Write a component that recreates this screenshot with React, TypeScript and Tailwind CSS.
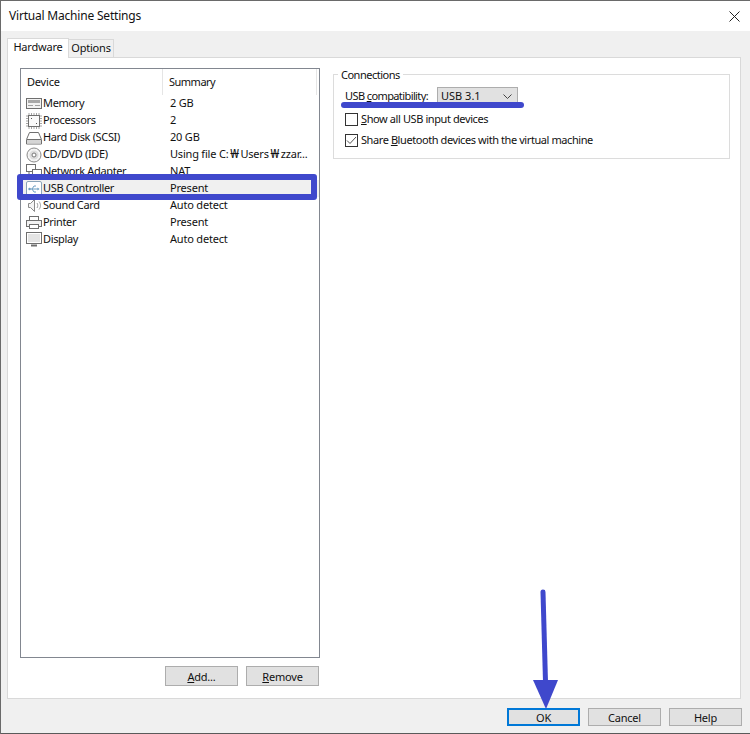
import React from "react";

const G = "#6f6f6f";

const icons: Record<string, React.ReactNode> = {
  memory: (
    <>
      <rect x="0.5" y="2.5" width="15" height="10" fill="#f2f2f2" stroke={G} />
      <rect x="2" y="4" width="12" height="3" fill="#a8a8a8" />
      <path d="M2 9.500h5M9 9.500h5" stroke="#a0a0a0" />
    </>
  ),
  cpu: (
    <>
      <path d="M3 0v16M5.500 0v16M8 0v16M10.500 0v16M13 0v16M0 3h16M0 5.500h16M0 8h16M0 10.500h16M0 13h16" stroke="#a5a5a5" />
      <rect x="2.500" y="2.500" width="11" height="11" fill="#fafafa" stroke={G} />
      <path d="M5 5h1v1H5zM10 10h1v1h-1z" fill="#555" />
    </>
  ),
  disk: (
    <>
      <path d="M3.500 2.500h9l3 7v4.500h-15v-4.500z" fill="#fff" stroke={G} />
      <path d="M1 9.500h14" stroke={G} />
      <rect x="1" y="10" width="14" height="3.500" fill="#d5d5d5" />
    </>
  ),
  cd: (
    <>
      <circle cx="8" cy="8" r="7" fill="#f4f4f4" stroke="#8a8a8a" />
      <circle cx="8" cy="8" r="4.500" fill="#dcdcdc" />
      <circle cx="8" cy="8" r="2" fill="#fff" stroke="#777" />
    </>
  ),
  net: (
    <>
      <rect x="0.500" y="0.500" width="9" height="7" fill="#fff" stroke={G} />
      <rect x="6.500" y="5.500" width="9" height="6" fill="#fff" stroke={G} />
      <path d="M3 8v5h5" stroke={G} fill="none" />
    </>
  ),
  usb: (
    <>
      <rect x="0.500" y="0.500" width="15" height="15" rx="1.500" fill="#fff" stroke="#8aa4b8" />
      <path d="M3 8h9M6 8l2-3h2M6 8l2 3h2" stroke="#6d9ec2" fill="none" />
      <path d="M13.500 8l-2-1.500v3z" fill="#6d9ec2" />
      <circle cx="3.500" cy="8" r="1.200" fill="#6d9ec2" />
    </>
  ),
  sound: (
    <>
      <path d="M2.500 5.500h2l4-4v12l-4-4h-2z" fill="#f4f4f4" stroke="#8a8a8a" />
      <path d="M11 5c1 1.500 1 3.500 0 5M13 3.500c2 2.500 2 5.500 0 8" stroke="#9a9a9a" fill="none" />
    </>
  ),
  printer: (
    <>
      <rect x="3.500" y="1.500" width="9" height="4" fill="#fff" stroke={G} />
      <rect x="0.500" y="5.500" width="15" height="6" fill="#f2f2f2" stroke={G} />
      <rect x="3.500" y="9.500" width="9" height="4" fill="#fff" stroke={G} />
    </>
  ),
  display: (
    <>
      <rect x="0.500" y="0.500" width="15" height="11" fill="#fff" stroke={G} />
      <rect x="2" y="2" width="12" height="8" fill="#e4e4e4" />
      <path d="M5 13.500h6" stroke={G} strokeWidth="2" />
    </>
  ),
};

const rows = [
  ["memory", "Memory", "2 GB"],
  ["cpu", "Processors", "2"],
  ["disk", "Hard Disk (SCSI)", "20 GB"],
  ["cd", "CD/DVD (IDE)", "Using file C:₩Users₩zzar..."],
  ["net", "Network Adapter", "NAT"],
  ["usb", "USB Controller", "Present"],
  ["sound", "Sound Card", "Auto detect"],
  ["printer", "Printer", "Present"],
  ["display", "Display", "Auto detect"],
];

function Summary({ text }: { text: string }) {
  const parts = text.split("₩");
  return (
    <span className="whitespace-nowrap">
      {parts.map((p, i) => (
        <React.Fragment key={i}>
          {i > 0 && <span className="inline-block w-[12px] text-center text-[13px] leading-none">₩</span>}
          {p}
        </React.Fragment>
      ))}
    </span>
  );
}

function Btn({ children, className = "" }: { children: React.ReactNode; className?: string }) {
  return (
    <div className={`w-[73px] flex items-center justify-center bg-[#e1e1e1] border border-[#adadad] leading-none ${className}`}>
      {children}
    </div>
  );
}

export default function App() {
  return (
    <div
      className="relative w-[750px] h-[734px] overflow-hidden flex flex-col bg-white border-l border-t border-[#6a6a6a] text-[#111] text-[11px] tracking-[-0.2px]"
      style={{ fontFamily: '"Noto Sans", "Noto Sans CJK KR", sans-serif' }}
    >
      <div className="h-[30px] shrink-0 bg-white flex items-center justify-between pl-[8px] pr-[10px] text-[12px]">
        <span>Virtual Machine Settings</span>
        <svg width="11" height="11" viewBox="0 0 11 11">
          <path d="M0.500 0.500l10 10M10.500 0.500l-10 10" stroke="#222" fill="none" />
        </svg>
      </div>

      <div className="flex-1 flex flex-col bg-[#f0f0f0] border-b border-[#5a5a5a] pt-[6px] pl-[6px] pr-[9px]">
        <div className="h-[20px] flex items-end">
          <div className="relative z-10 h-[20px] w-[62px] -mb-px bg-white border border-b-0 border-[#d9d9d9] flex items-center justify-center pb-[2px]">
            Hardware
          </div>
          <div className="h-[18px] w-[45px] bg-[#f0f0f0] border border-b-0 border-l-0 border-[#d9d9d9] flex items-center justify-center">
            Options
          </div>
        </div>

        <div className="h-[642px] bg-white border border-[#d9d9d9] flex pt-[10px] pl-[12px] gap-[13px]">
          <div className="w-[300px] flex flex-col">
            <div className="h-[590px] border border-[#828790] flex flex-col">
              <div className="h-[26px] flex items-center shrink-0">
                <div className="w-[142px] h-[26px] pl-[6px] flex items-center border-r border-[#e5e5e5]">Device</div>
                <div className="w-[154px] h-[26px] pl-[6px] flex items-center border-r border-[#e5e5e5] tracking-[-0.5px]">Summary</div>
              </div>
              <div className="flex flex-col">
                {rows.map(([icon, name, summary]) => (
                  <div
                    key={name}
                    className={`h-[17px] flex items-center pl-[5px] ${icon === "usb" ? "bg-[#f0f0f0]" : ""}`}
                  >
                    <svg width="16" height="16" viewBox="0 0 16 16" className="shrink-0 mr-px">
                      {icons[icon]}
                    </svg>
                    <span className="w-[127px] whitespace-nowrap tracking-[-0.35px]">{name}</span>
                    <Summary text={summary} />
                  </div>
                ))}
              </div>
            </div>
            <div className="flex justify-end gap-[8px] mt-[8px] pr-px">
              <Btn className="h-[20px]"><span><u>A</u>dd...</span></Btn>
              <Btn className="h-[20px]"><span><u>R</u>emove</span></Btn>
            </div>
          </div>

          <div className="w-[397px] h-[85px] relative mt-[6px] border border-[#dcdcdc] pl-[11px] pt-[12px]">
            <span className="absolute -top-[7px] left-[4px] bg-white px-[3px] leading-[14px] tracking-[-0.5px]">Connections</span>
            <div className="flex items-start h-[18px]">
              <span className="w-[92px] whitespace-nowrap leading-[18px] tracking-[-0.6px]">USB <u>c</u>ompatibility:</span>
              <div className="w-[81px] h-[18px] flex items-center justify-between bg-[#e1e1e1] border border-[#adadad] pl-[3px] pr-[5px]">
                <span className="tracking-normal">USB 3.1</span>
                <svg width="9" height="5" viewBox="0 0 9 5">
                  <path d="M0.500 0.500l4 4 4-4" stroke="#444" fill="none" />
                </svg>
              </div>
            </div>
            <div className="flex items-center h-[21px] mt-[4px] tracking-[-0.4px]">
              <div className="w-[13px] h-[13px] border border-[#333] bg-white mr-[3px]" />
              <span><u>S</u>how all USB input devices</span>
            </div>
            <div className="flex items-center h-[21px] tracking-[-0.42px]">
              <div className="w-[13px] h-[13px] border border-[#333] bg-white mr-[3px] flex items-center justify-center">
                <svg width="11" height="9" viewBox="0 0 11 9">
                  <path d="M1 4.500l3 3 6-6.500" stroke="#555" fill="none" />
                </svg>
              </div>
              <span>Share <u>B</u>luetooth devices with the virtual machine</span>
            </div>
          </div>
        </div>

        <div className="flex justify-end gap-[8px] mt-[9px] -mr-px">
          <Btn className="h-[18px] border-2 !border-[#0078d7]">OK</Btn>
          <Btn className="h-[18px]">Cancel</Btn>
          <Btn className="h-[18px]">Help</Btn>
        </div>
      </div>

      {/* Hand-drawn annotations */}
      <div className="absolute left-[16px] top-[173px] w-[300px] h-[26px] border-[6px] border-[#3f48cc] rounded-[3px]" />
      <div className="absolute left-[340px] top-[101px] w-[183px] h-[6px] bg-[#3f48cc] rounded-full" />
      <svg className="absolute left-[520px] top-[586px]" width="50" height="132" viewBox="0 0 50 132">
        <path d="M22 5 L24.500 95" stroke="#3f48cc" strokeWidth="5" strokeLinecap="round" fill="none" />
        <path d="M12 93 L37 93 L25 122 Z" fill="#3f48cc" />
      </svg>
    </div>
  );
}
